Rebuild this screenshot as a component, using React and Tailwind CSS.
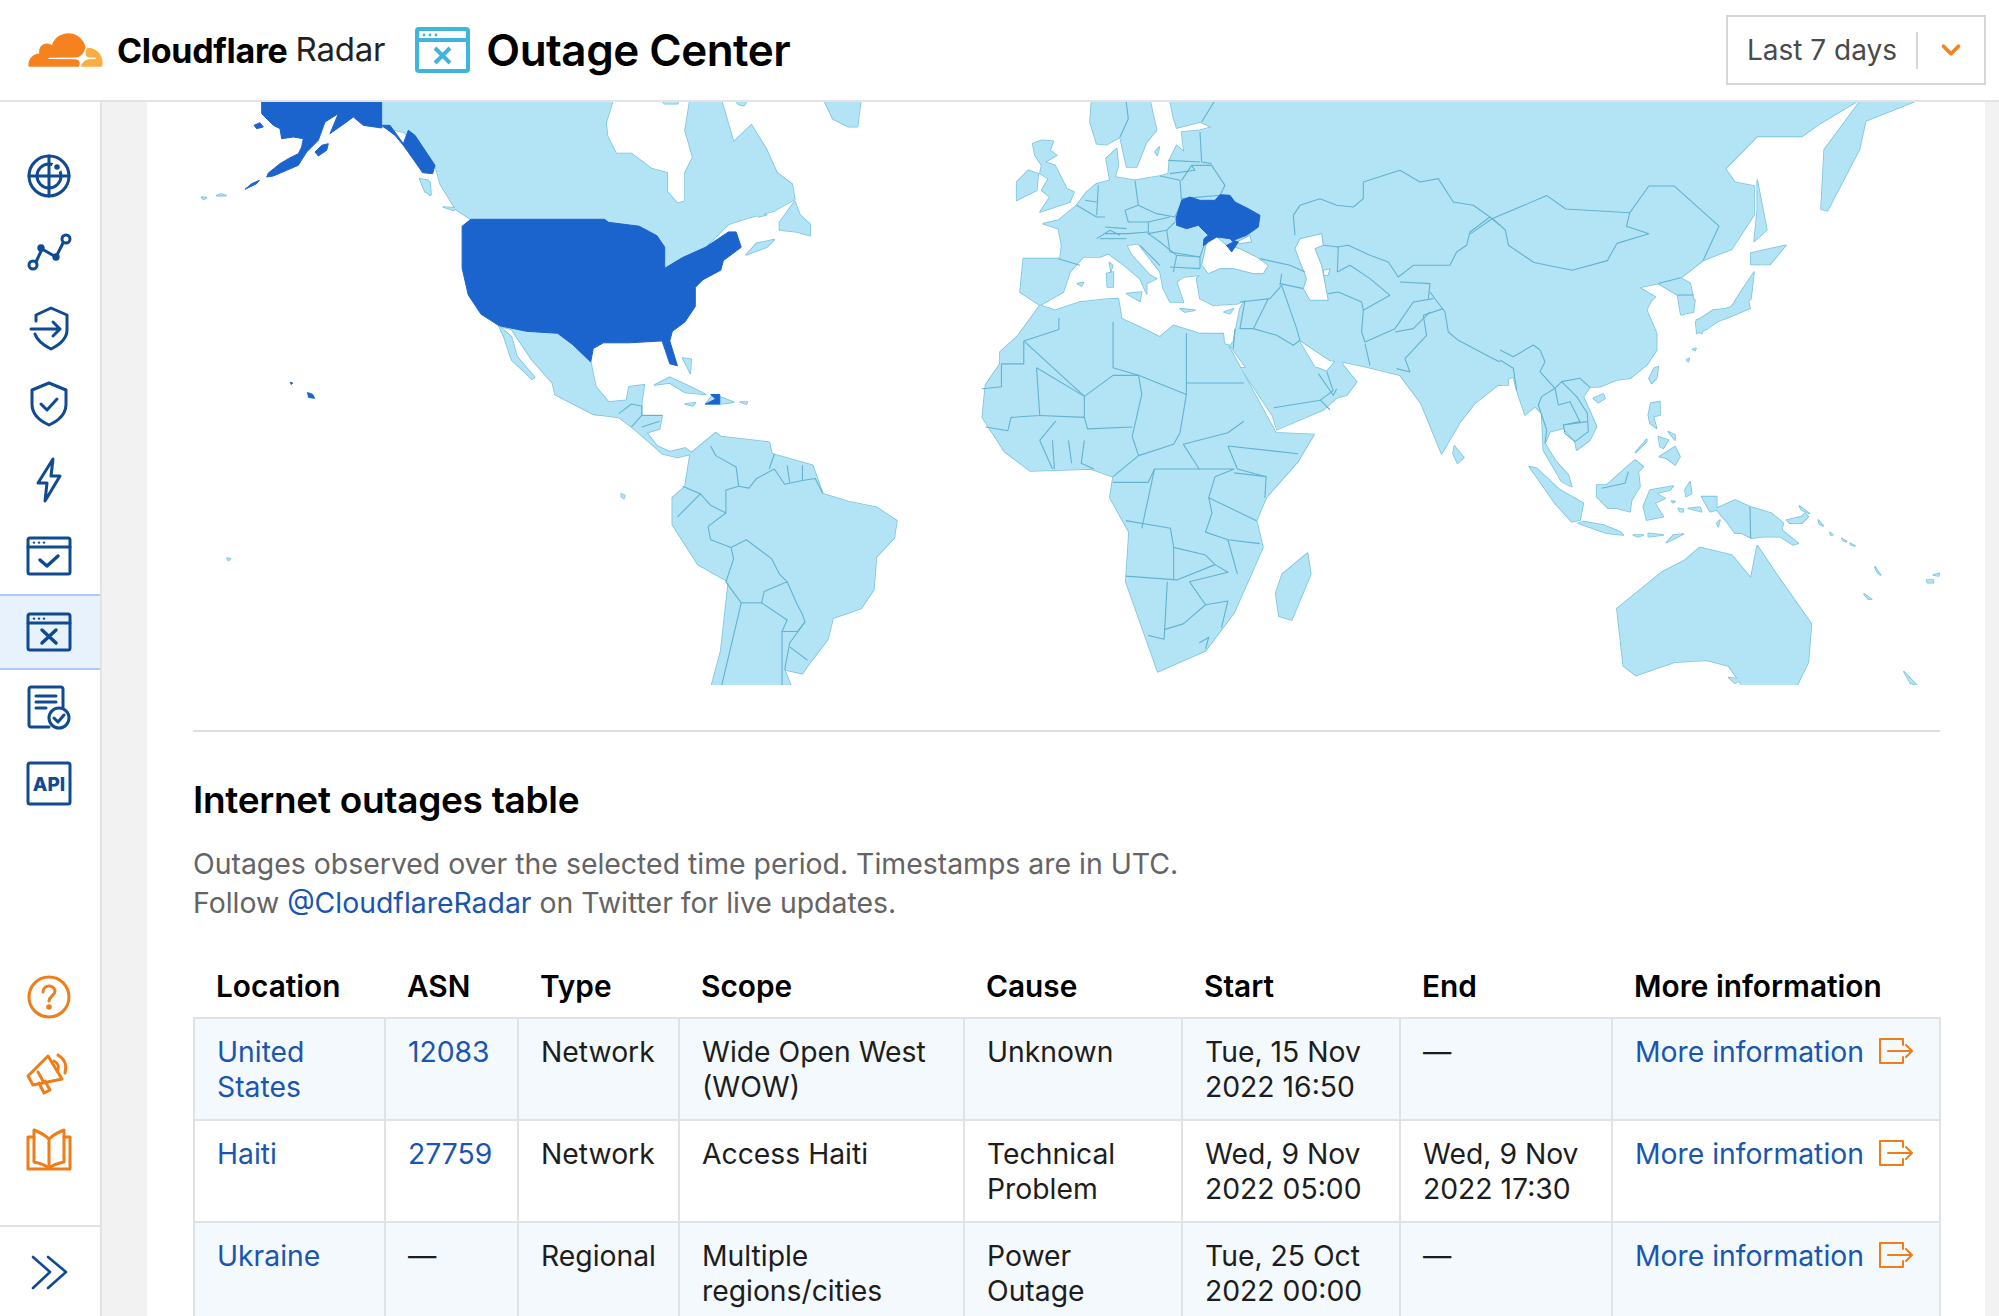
import { ChevronDown } from 'lucide-react';

const BLUE = '#0f4a92';
const ORANGE = '#ee7d1a';
const MAP_DARK = '#1c64cd';

// map shapes, each group was traced in its own crop of the map
const mapGroups = [
  {
    // americas
    transform: 'translate(180 100) scale(0.5102 0.3824)',
    land: [
      '396,-5 850,-5 835,60 838,95 855,140 885,140 925,180 955,190 955,240 975,270 990,265 990,190 1005,150 990,80 1000,-5 1060,-5 1085,110 1120,65 1150,130 1170,190 1200,220 1205,260 1165,290 1110,310 1075,325 1030,385 985,412 950,440 950,380 900,330 840,320 832,312 570,312 540,285 510,220 500,170 440,85 410,75 396,70',
      '470,205 490,215 492,248 480,240',
      '1175,320 1205,265 1215,300 1235,325 1235,355 1210,345 1175,340',
      '1110,405 1130,375 1165,365 1150,385 1120,400',
      '1260,-5 1335,-5 1328,70 1310,70 1280,50',
      '940,-5 980,-5 975,10 950,10',
      '1085,-5 1115,-5 1105,15 1095,12',
      '1125,295 1150,300 1135,305',
      '625,590 680,605 740,610 770,640 805,685 815,750 840,790 875,785 880,750 910,745 905,790 905,825 945,825 940,860 915,870 935,905 960,920 990,910 1005,925 975,935 945,925 920,895 885,855 860,830 830,825 810,822 735,770 730,740 690,680 650,600',
      '625,590 650,620 660,670 695,725 690,730 650,680 635,620',
      '930,745 960,725 1000,750 1030,770 990,765 960,740',
      '1030,795 1045,770 1085,790 1060,795',
      '990,795 1010,792 1005,800',
      '1098,790 1112,790 1110,795',
      '985,675 1002,678 1000,715 995,700',
      '1000,925 1050,870 1060,880 1155,895 1160,925 1240,955 1260,1030 1310,1050 1365,1065 1405,1100 1400,1145 1365,1195 1360,1280 1335,1330 1280,1355 1270,1410 1230,1480 1220,1500 1185,1490 1200,1540 1040,1540 1060,1440 1075,1260 1015,1215 965,1110 965,1040 990,1010',
      '865,1030 872,1034 870,1042 865,1038',
      '42,254 52,256 46,260',
      '72,250 90,250 80,246',
      '92,1198 99,1200 95,1204',
    ],
    dark: [
      '553,330 570,312 832,312 840,320 900,330 935,355 950,385 950,440 985,412 1030,385 1075,345 1090,345 1100,385 1065,420 1060,445 1025,470 1010,490 1010,540 990,580 965,605 960,630 975,695 960,690 945,630 880,635 830,635 810,650 805,685 770,640 740,610 680,605 625,590 590,560 565,510 553,440',
      '1030,795 1058,795 1058,770 1040,770 1050,782',
      '250,765 260,770 264,780 252,778',
      '216,738 221,740 218,744',
    ],
    lines: [
      '860,820 885,795 905,800 905,825',
      '885,855 905,825 945,825',
      '905,855 940,840',
      '1040,905 1050,930 1090,960 1095,1010 1070,1020 1070,1080 1040,1060 1020,1030 985,1010',
      '975,1090 1020,1030',
      '1070,1080 1035,1115 1040,1150 1080,1170 1110,1150 1160,1200 1175,1240 1190,1260 1145,1285 1140,1315 1190,1360 1180,1390 1210,1390 1225,1365',
      '1080,1170 1085,1200 1070,1260 1100,1315 1085,1400 1060,1540',
      '1100,1315 1140,1315',
      '1095,1010 1115,1015 1130,990 1165,965 1185,1005 1220,995 1245,990 1260,1030',
      '1165,925 1155,965',
      '1190,955 1195,1000',
      '1220,955 1220,995',
      '1190,1260 1210,1320 1220,1345 1225,1365 1195,1420 1185,1490',
      '1195,1430 1230,1465',
      '1180,1390 1180,1540',
    ],
  },
  {
    // alaska
    transform: 'translate(240 102) scale(0.3333)',
    land: ['540,232 565,235 570,280 550,255', '610,315 650,318 640,325'],
    dark: [
      '65,-5 425,-5 425,78 370,70 340,45 320,60 270,95 295,35 255,60 235,115 200,150 175,190 140,205 100,222 80,225 85,213 120,185 145,170 175,155 185,135 190,110 160,105 125,110 120,80 100,70 65,35',
      '425,70 450,70 490,125 505,85 525,100 585,190 578,215 548,212 515,165 490,130 465,100',
      '42,70 60,62 70,75 50,80',
      '225,150 245,130 265,125 260,145 235,162',
      '15,262 35,245 58,235 50,245',
    ],
    lines: [],
  },
  {
    // asia, africa, australia
    transform: 'translate(960 100) scale(0.6378 0.3824)',
    land: [
      '820,-5 1415,-5 1350,60 1320,95 1250,95 1200,180 1215,215 1245,225 1245,300 1210,390 1165,420 1130,465 1145,480 1150,520 1150,555 1130,560 1125,510 1095,480 1065,490 1090,515 1085,523 850,600 860,745 830,745 785,840 755,925 722,790 820,700',
      '1415,-5 1510,-5 1420,55 1410,130 1360,290 1350,285 1355,130',
      '75,660 420,640 495,870 555,875 530,945 480,1040 465,1100 475,1170 430,1340 385,1440 310,1495 260,1260 265,1130 235,1040 240,985 205,965 110,970 70,920 35,830 40,745',
      '440,700 490,825 497,862 570,810 620,735 590,680 575,710 560,700',
      '545,1185 550,1240 520,1360 500,1350 495,1290 505,1240',
      '775,905 790,935 780,950 773,925',
      '1245,450 1240,520 1170,600 1155,610 1155,575 1210,540 1225,500',
      '1240,400 1295,380 1270,430 1240,430',
      '1250,210 1265,340 1245,370 1250,290',
      '1030,1330 1100,1235 1135,1205 1160,1170 1210,1190 1240,1250 1250,1165 1280,1240 1335,1370 1330,1470 1310,1540 1230,1540 1205,1480 1170,1465 1120,1470 1060,1505 1040,1480',
      '1480,1495 1500,1530 1490,1525',
      '1205,1510 1225,1515 1215,1525',
    ],
    dark: [],
    lines: [
      '835,310 920,250 950,285 1050,295 1080,225 1120,225 1190,330 1165,420',
      '855,340 860,380 900,425 960,445 1015,420 1030,375 1080,350 1045,330 1050,295',
      '800,350 835,310 855,340',
      '1130,465 1095,480',
      '1125,510 1150,510',
      '492,805 565,785 585,760 575,710',
      '565,785 580,810',
      // africa
      '100,630 100,690 65,690 65,750 35,755',
      '100,630 195,775 240,720 280,720 355,770',
      '155,570 155,600 100,630',
      '240,580 240,700 280,720',
      '355,610 355,770 345,870',
      '355,740 445,740',
      '120,700 125,825 80,830 75,865 40,855',
      '120,700 195,775 195,830 125,825',
      '280,720 285,770 270,880 280,930 240,985',
      '345,870 335,900 280,930',
      '195,830 200,860 270,855',
      '150,840 125,890 145,965',
      '195,890 190,950 210,965',
      '145,890 148,965',
      '170,890 175,950',
      '350,900 420,870 445,840',
      '420,905 530,925',
      '420,905 435,965 480,985',
      '350,900 375,965 305,965 295,1000 240,1000',
      '305,965 285,1120',
      '375,965 430,965 400,985 390,1040 465,1100',
      '430,975 480,985 478,1040',
      '390,1040 395,1080 385,1130 420,1150 470,1160',
      '260,1100 330,1120 335,1170 385,1190 400,1215 340,1255 260,1245',
      '335,1170 335,1255',
      '400,1215 420,1235 360,1260 385,1320 420,1310 410,1380',
      '325,1260 320,1410 295,1400',
      '385,1320 350,1370 320,1385',
      '420,1150 435,1240',
      '375,1420 390,1405 385,1435',
    ],
  },
  {
    // europe, middle east
    transform: 'translate(1000 102) scale(0.3333)',
    land: [
      '130,365 175,355 230,310 260,270 290,245 330,235 318,170 350,140 355,190 345,225 405,235 480,222 505,215 508,175 530,130 552,150 545,90 600,85 635,75 600,60 530,78 520,45 510,-5 1500,-5 1500,845 1430,900 1260,900 1200,820 1100,795 1030,780 990,775 900,715 900,722 950,805 985,810 1020,770 1030,790 1070,840 1040,880 960,900 800,900 740,800 690,730 700,720 720,620 735,595 715,605 640,610 600,590 590,530 600,520 550,525 530,540 550,600 510,600 490,560 480,510 450,470 415,425 380,430 395,460 450,520 470,530 440,545 440,575 420,530 360,480 325,455 300,465 250,465 210,510 190,570 120,610 90,590 60,570 70,470 180,470 185,430 175,380',
      '275,-5 450,-5 470,85 440,120 410,195 380,195 360,105 320,128 290,125 270,60',
      '465,150 478,135 472,160',
      '98,125 125,115 160,118 150,145 170,160 135,180 165,190 200,260 222,270 210,300 120,330 150,285 125,265 145,230 120,215 125,190 105,160',
      '50,240 85,205 115,215 110,265 50,295',
      '320,515 340,510 340,555 322,555',
      '328,482 338,490 333,508',
      '380,575 425,570 420,598',
      '540,620 585,625 555,630',
      '672,630 700,620 690,635',
      '232,545 250,542 245,552',
      '0,750 55,700 120,610 165,625 240,600 315,592 355,590 365,650 430,680 480,705 520,670 600,695 670,695 672,720 725,810 748,900 0,900',
    ],
    sea: [
      '605,490 620,420 650,405 680,430 720,440 770,465 805,490 790,515 760,515 700,500 660,500 625,515',
      '710,420 750,400 755,420 720,425',
      '885,440 900,410 965,395 970,430 945,440 965,490 985,595 930,595 910,560 920,530 900,480',
      '970,505 990,500 985,520 972,520',
    ],
    dark: [
      '528,350 545,295 570,285 600,295 645,295 660,278 690,280 705,300 745,320 780,340 775,375 740,400 700,415 715,420 695,450 680,430 700,420 690,410 650,405 625,420 610,432 612,410 625,400 595,370 560,380 530,370',
    ],
    lines: [
      '378,-5 385,50 360,105',
      '645,-5 605,60',
      '255,295 290,300',
      '230,310 290,345 315,345',
      '175,470 240,490',
      '295,250 290,340',
      '405,235 415,310',
      '315,375 380,380',
      '375,325 415,310',
      '415,310 470,335 525,345 545,300 540,235 480,222',
      '375,325 385,360 445,360 510,345',
      '315,395 385,395 445,390',
      '445,360 445,395 500,385 525,360',
      '500,385 510,450 600,465 612,430',
      '445,395 480,420 530,460 520,510',
      '420,430 480,490',
      '530,460 600,465 600,500',
      '510,495 600,500',
      '290,410 330,385 360,400',
      '300,410 380,410',
      '545,290 660,280 675,250 635,190 575,190 545,235',
      '505,175 600,180',
      '510,215 585,205 575,190',
      '600,90 605,180 635,185',
      '880,340 900,310 960,290 1010,310 1060,315 1090,290 1090,240 1200,205 1260,240 1315,230 1360,300 1420,310 1470,345 1500,370',
      '880,340 885,400',
      '970,430 1015,435 1012,510',
      '1012,435 1045,430 1110,460 1165,480 1195,525 1240,490 1350,490 1370,450 1400,430 1410,390 1470,345',
      '1012,510 1050,490 1110,530 1170,580',
      '985,575 1015,570 1085,600 1090,625 1170,580',
      '1090,625 1085,690 1095,720 1185,680 1240,600 1300,590',
      '1095,725 1110,790',
      '1185,690 1240,680 1290,630',
      '1190,800 1230,810 1215,770 1280,700 1270,640 1330,620',
      '1200,540 1290,545 1285,590',
      '1290,570 1335,630 1345,690 1375,715 1480,770 1500,780',
      '720,600 810,590 845,550',
      '845,515 840,550',
      '780,470 870,490 915,510',
      '840,545 910,560',
      '845,550 890,680 900,715',
      '760,680 830,700 880,730 900,715',
      '735,595 720,680 760,680 805,590',
      '705,680 700,740',
      '1010,860 1000,880 955,815',
    ],
  },
  {
    // south east asia
    transform: 'translate(1500 300) scale(0.3333)',
    land: [
      '0,0 455,0 440,30 470,100 470,150 440,195 390,235 350,240 300,260 270,262 250,290 290,380 270,420 230,450 225,425 190,385 150,395 135,430 165,480 205,525 215,560 185,545 130,450 125,340 105,320 75,345 50,270 40,230 15,240 0,255',
      '462,205 475,200 470,235 455,250 447,235',
      '280,295 310,282 315,295 295,308',
      '452,310 480,305 480,345 460,350 470,385 450,370 445,345',
      '475,410 505,420 490,445 480,440',
      '505,395 525,405 525,420',
      '478,470 510,450 525,440 540,470 525,495 500,475',
      '407,457 440,418 440,425',
      '290,555 320,555 370,510 405,480 430,500 415,515 420,560 395,600 390,635 350,625 325,625 290,590',
      '450,570 520,558 510,570 470,580 495,595 465,610 490,650 440,660 430,620',
      '235,670 250,665 310,675 360,695 370,705 320,700',
      '400,705 430,705 415,710',
      '445,700 490,705 445,710',
      '500,728 520,705 550,702',
      '88,500 110,505 180,570 250,610 240,660 215,665 165,610',
      '555,570 570,545 575,580 558,590',
      '605,590 650,590 650,625 705,600 750,620 815,640 850,670 845,690 895,730 880,735 840,710 790,710 755,715 725,700 705,700 680,665 650,630 630,635',
      '860,660 905,650 915,640 925,650 905,670 870,670',
      '898,618 928,640 905,630',
      '535,625 550,628 550,635 540,635',
      '565,625 600,622 605,635',
      '515,603 525,605 518,608',
      '650,670 660,660 655,680',
      '955,660 970,678 958,672',
      '1025,715 1040,725 1030,722',
      '1050,730 1065,738 1055,736',
      '990,698 998,705 992,705',
      '1125,800 1142,825 1132,818',
      '1280,840 1300,840 1300,848 1282,848',
      '1300,825 1318,820 1316,828',
      '1092,882 1115,898 1105,898',
      '560,180 568,175 565,185',
      '578,148 588,145 585,152',
      '587,65 640,30 690,25 745,0 750,25 680,55 615,75 605,100 590,90',
      '540,0 585,0 580,30 545,45',
    ],
    dark: [],
    lines: [
      '120,150 135,185 120,215 165,265 125,290 115,315 140,390 135,430',
      '0,150 40,170 100,135 120,150',
      '0,180 40,205 50,270',
      '165,265 175,315 210,305 240,365 190,375 195,400 225,425 265,395 262,340 230,290 185,245 165,265',
      '185,245 240,235 270,262',
      '190,375 240,368 262,365',
      '305,565 375,550 385,515',
      '750,620 752,715',
    ],
  },
];

function WorldMap() {
  const fixed = { vectorEffect: 'non-scaling-stroke' };
  return (
    <svg viewBox="193 102 1747 583" className="block w-full h-[583px]" strokeLinejoin="round">
      {/* outline first, then fill again so that seams between groups don't show */}
      {mapGroups.map((g, i) => (
        <g key={i} transform={g.transform} fill="#b3e4f5" stroke="#7cc4de" strokeWidth="1.6">
          {g.land.map((p) => <polygon key={p} points={p} {...fixed} />)}
        </g>
      ))}
      {mapGroups.map((g, i) => (
        <g key={i} transform={g.transform} fill="#b3e4f5">
          {g.land.map((p) => <polygon key={p} points={p} />)}
        </g>
      ))}
      {mapGroups.map((g, i) => (
        <g key={i} transform={g.transform}>
          <g fill="#fff" stroke="#7cc4de" strokeWidth="1">
            {(g.sea || []).map((p) => <polygon key={p} points={p} {...fixed} />)}
          </g>
          <g fill="none" stroke="#63b2d0" strokeWidth="1.1">
            {g.lines.map((p) => <polyline key={p} points={p} {...fixed} />)}
          </g>
          <g fill={MAP_DARK} stroke={MAP_DARK} strokeWidth="1">
            {g.dark.map((p) => <polygon key={p} points={p} {...fixed} />)}
          </g>
        </g>
      ))}
    </svg>
  );
}

function IconBox({ children, stroke = BLUE, width = 3 }) {
  return (
    <svg viewBox="0 0 48 48" className="w-[48px] h-[48px]" fill="none" stroke={stroke} strokeWidth={width} strokeLinecap="round" strokeLinejoin="round">
      {children}
    </svg>
  );
}

function BrowserIcon({ children }) {
  return (
    <>
      <rect x="3" y="6" width="42" height="36" rx="2" />
      <path d="M3 15H45" />
      <circle cx="9" cy="10.6" r="1.2" fill={BLUE} stroke="none" />
      <circle cx="14" cy="10.6" r="1.2" fill={BLUE} stroke="none" />
      <circle cx="19" cy="10.6" r="1.2" fill={BLUE} stroke="none" />
      {children}
    </>
  );
}

const topIcons = [
  <>
    <circle cx="24" cy="24" r="20" />
    <circle cx="24" cy="24" r="12" />
    <path d="M24 4V44M4 24H44" />
    <circle cx="32" cy="15" r="4" fill="#0f4a92" stroke="#fff" strokeWidth="2.5" />
  </>,
  <>
    <path d="M11 34L17 21L31 29L38 15" />
    <circle cx="8" cy="37" r="4" fill="#fff" />
    <circle cx="16" cy="20" r="2.2" fill="#0f4a92" />
    <circle cx="31" cy="29" r="2.2" fill="#0f4a92" />
    <circle cx="41" cy="11" r="4" fill="#fff" />
  </>,
  <>
    <path d="M11 17V11L26 4L42 11V26C42 35 34 41 26 45C18 41 12 36 10 30" />
    <path d="M6 25H35M28 18L35 25L28 32" />
  </>,
  <>
    <path d="M24 3L41 10V24C41 34 33 41 24 45C15 41 7 34 7 24V10Z" />
    <path d="M16 24L22 30L32 19" />
  </>,
  <path d="M28 3L13 27H22L20 45L35 20H26Z" />,
  <BrowserIcon><path d="M15 28L22 34L33 24" strokeWidth="3.5" /></BrowserIcon>,
  <BrowserIcon><path d="M17 22L31 35M31 22L17 35" strokeWidth="3.5" /></BrowserIcon>,
  <>
    <path d="M24 43H6C5 43 4 42 4 41V5C4 4 5 3 6 3H36C37 3 38 4 38 5V24" />
    <path d="M11 12H31M11 18H31M11 24H21" />
    <circle cx="34" cy="34" r="10" fill="#fff" />
    <path d="M29 34L33 38L39 31" />
  </>,
  <>
    <rect x="3" y="3" width="42" height="41" rx="2" />
    <text x="24" y="31" textAnchor="middle" fontFamily="Inter, sans-serif" fontWeight="800" fontSize="19" fill="#0f4a92" stroke="none">API</text>
  </>,
];

const bottomIcons = [
  <>
    <circle cx="24" cy="24" r="20" />
    <path d="M18 19C18 15 21 13 24 13C28 13 30 16 30 18C30 23 24 23 24 28" />
    <circle cx="24" cy="34" r="1.3" fill="#ee7d1a" />
  </>,
  <>
    <path d="M3 27L8 36L37 30L23 7Z" />
    <path d="M13 23L18 32" />
    <path d="M14 34L19 44L25 41L20 32" />
    <path d="M29 12C33 14 34 18 33 21M33 6C40 10 42 17 40 24" />
  </>,
  <>
    <path d="M9 12H3V44H45V12H39" />
    <path d="M24 14C20 10 14 7 9 5V37C14 38 20 40 24 43C28 40 34 38 39 37V5C34 7 28 10 24 14Z" />
    <path d="M24 14V43" />
  </>,
];

function ExitIcon() {
  return (
    <svg viewBox="0 0 34 26" className="w-[34px] h-[26px] shrink-0 -mt-[3px]" fill="none" stroke={ORANGE} strokeWidth="2" strokeLinecap="round" strokeLinejoin="round">
      <path d="M24 7V1H1V25H24V19" />
      <path d="M9 13H33M27 7L33 13L27 19" />
    </svg>
  );
}

const rows = [
  { location: 'United States', asn: '12083', type: 'Network', scope: 'Wide Open West (WOW)', cause: 'Unknown', start: 'Tue, 15 Nov 2022 16:50', end: '—' },
  { location: 'Haiti', asn: '27759', type: 'Network', scope: 'Access Haiti', cause: 'Technical Problem', start: 'Wed, 9 Nov 2022 05:00', end: 'Wed, 9 Nov 2022 17:30' },
  { location: 'Ukraine', asn: '—', type: 'Regional', scope: 'Multiple regions/cities', cause: 'Power Outage', start: 'Tue, 25 Oct 2022 00:00', end: '—' },
];

const headers = ['Location', 'ASN', 'Type', 'Scope', 'Cause', 'Start', 'End', 'More information'];

export default function App() {
  return (
    <div className="h-[1316px] overflow-hidden bg-white text-[#1d1d1d] flex flex-col" style={{ fontFamily: 'Inter, sans-serif' }}>
      {/* Header */}
      <header className="h-[102px] shrink-0 border-b-2 border-[#e3e3e3] flex items-center pl-[28px] pr-[13px]">
        <svg viewBox="0 6.5 24 11" className="w-[75px] h-[34px] shrink-0">
          <path fill="#f6821f" d="M16.5088 16.8447c.1475-.5068.0908-.9707-.1553-1.3154-.2246-.3164-.6045-.499-1.0615-.5205l-8.6592-.1123a.1559.1559 0 0 1-.1333-.0713c-.0283-.042-.0351-.0986-.021-.1553.0278-.084.1123-.1484.2036-.1562l8.7359-.1123c1.0351-.0489 2.1601-.8868 2.5537-1.9136l.499-1.3013c.0215-.0561.0293-.1128.0147-.168-.5625-2.5463-2.835-4.4453-5.5499-4.4453-2.5039 0-4.6284 1.6177-5.3876 3.8614-.4927-.3658-1.1187-.5625-1.794-.499-1.2026.119-2.1665 1.083-2.2861 2.2856-.0283.31-.0069.6128.0635.894C1.5683 13.171 0 14.7754 0 16.752c0 .1748.0142.3515.0352.5273.0141.083.0844.1475.1689.1475h15.9814c.0909 0 .1758-.0645.2032-.1553l.12-.4268z" />
          <path fill="#fbad41" d="M19.2656 11.2813c-.0771 0-.1611 0-.2383.0112-.0566 0-.1054.0415-.127.0976l-.3378 1.1744c-.1475.5068-.0918.9707.1543 1.3164.2256.3164.6055.498 1.0625.5195l1.8437.1133c.0557 0 .1055.0263.1329.0703.0283.043.0351.1074.0214.1562-.0283.084-.1132.1485-.204.1553l-1.921.1123c-1.041.0488-2.1582.8867-2.5527 1.914l-.1406.3585c-.0283.0713.0215.1416.0986.1416h6.5977c.0771 0 .1474-.0489.169-.126.1122-.4082.1757-.837.1757-1.2803 0-2.6025-2.125-4.727-4.7344-4.727" />
        </svg>
        <span className="ml-[14px] text-[34px] font-bold tracking-[-0.3px] text-black">Cloudflare</span>
        <span className="ml-[8px] text-[33px] font-normal tracking-[-0.2px] text-[#222]">Radar</span>
        <svg viewBox="0 0 55 46" className="ml-[30px] w-[55px] h-[46px] shrink-0" fill="none" stroke="#3fb4dc" strokeWidth="4">
          <rect x="2" y="2" width="51" height="42" rx="2" />
          <path d="M2 13H53" />
          <circle cx="9" cy="8" r="1.4" fill="#3fb4dc" stroke="none" />
          <circle cx="15" cy="8" r="1.4" fill="#3fb4dc" stroke="none" />
          <circle cx="21" cy="8" r="1.4" fill="#3fb4dc" stroke="none" />
          <path d="M20 21L35 36M35 21L20 36" />
        </svg>
        <h1 className="ml-[16px] text-[44px] font-semibold tracking-[-0.5px] text-black">Outage Center</h1>
        <div className="ml-auto w-[260px] h-[70px] border-2 border-[#d6d6d6] flex items-center pl-[19px] text-[#4a4a4a]">
          <span className="text-[28px]">Last 7 days</span>
          <div className="ml-auto w-[2px] h-[37px] bg-[#d6d6d6]" />
          <div className="w-[66px] flex justify-center">
            <ChevronDown className="w-[30px] h-[30px] text-[#f6821f]" strokeWidth={3} />
          </div>
        </div>
      </header>

      <div className="flex flex-1 min-h-0">
        {/* Sidebar */}
        <aside className="w-[102px] shrink-0 border-r-2 border-[#e3e3e3] flex flex-col pt-[36px]">
          {topIcons.map((icon, i) => (
            <div key={i} className={`h-[76px] pr-[2px] flex items-center justify-center ${i === 6 ? 'bg-[#e8f2fd] border-y-2 border-[#aacdf7]' : ''}`}>
              <IconBox>{icon}</IconBox>
            </div>
          ))}
          <div className="mt-auto flex flex-col">
            {bottomIcons.map((icon, i) => (
              <div key={i} className="h-[76px] pr-[2px] flex items-center justify-center">
                <IconBox stroke={ORANGE}>{icon}</IconBox>
              </div>
            ))}
            <div className="mt-[38px] h-[91px] pr-[2px] border-t-2 border-[#e3e3e3] flex items-start pt-[21px] justify-center">
              <svg viewBox="0 0 48 48" className="w-[48px] h-[48px]" fill="none" stroke={BLUE} strokeWidth="2.6" strokeLinecap="round" strokeLinejoin="round">
                <path d="M8 9L25 24L8 40M23 9L41 24L23 40" />
              </svg>
            </div>
          </div>
        </aside>

        <div className="w-[45px] shrink-0 bg-[#f2f2f2]" />

        {/* Main */}
        <main className="flex-1 min-w-0 bg-white pl-[46px] pr-[45px] overflow-hidden">
          <WorldMap />
          <div className="mt-[45px] h-[2px] bg-[#dedede]" />
          <h2 className="mt-[46px] text-[37px] leading-[44px] font-semibold tracking-[-0.3px] text-black">Internet outages table</h2>
          <p className="mt-[22px] text-[28.4px] leading-[39px] text-[#646464]">
            Outages observed over the selected time period. Timestamps are in UTC.
            <br />
            Follow <a className="text-[#1a56b0]">@CloudflareRadar</a> on Twitter for live updates.
          </p>
          <table className="mt-[30px] w-[1746px] table-fixed border-collapse text-[28.3px] leading-[35px]">
            <colgroup>
              <col className="w-[191px]" />
              <col className="w-[133px]" />
              <col className="w-[161px]" />
              <col className="w-[285px]" />
              <col className="w-[218px]" />
              <col className="w-[218px]" />
              <col className="w-[212px]" />
              <col className="w-[328px]" />
            </colgroup>
            <thead>
              <tr className="h-[66px]">
                {headers.map((h) => (
                  <th key={h} className="px-[22px] pt-[3px] text-left text-[29.8px] font-semibold text-black whitespace-nowrap">{h}</th>
                ))}
              </tr>
            </thead>
            <tbody>
              {rows.map((row, i) => (
                <tr key={row.location} className={i % 2 === 0 ? 'bg-[#f3f9fc]' : 'bg-white'}>
                  <td className="px-[22px] pt-[16px] pb-[14px] align-top border-2 border-[#e0e3e6] text-[#1a56b0]">{row.location}</td>
                  <td className={`px-[22px] pt-[16px] pb-[14px] align-top border-2 border-[#e0e3e6] ${row.asn === '—' ? '' : 'text-[#1a56b0]'}`}>{row.asn}</td>
                  <td className="px-[22px] pt-[16px] pb-[14px] align-top border-2 border-[#e0e3e6]">{row.type}</td>
                  <td className="px-[22px] pt-[16px] pb-[14px] align-top border-2 border-[#e0e3e6]">{row.scope}</td>
                  <td className="px-[22px] pt-[16px] pb-[14px] align-top border-2 border-[#e0e3e6]">{row.cause}</td>
                  <td className="px-[22px] pt-[16px] pb-[14px] align-top border-2 border-[#e0e3e6]">{row.start}</td>
                  <td className="px-[22px] pt-[16px] pb-[14px] align-top border-2 border-[#e0e3e6]">{row.end}</td>
                  <td className="px-[22px] pt-[16px] pb-[14px] align-top border-2 border-[#e0e3e6]">
                    <div className="flex items-center gap-[15px] text-[#1a56b0] whitespace-nowrap">
                      <span>More information</span>
                      <ExitIcon />
                    </div>
                  </td>
                </tr>
              ))}
            </tbody>
          </table>
        </main>

        <div className="w-[14px] shrink-0 bg-[#f2f2f2]" />
      </div>
    </div>
  );
}
